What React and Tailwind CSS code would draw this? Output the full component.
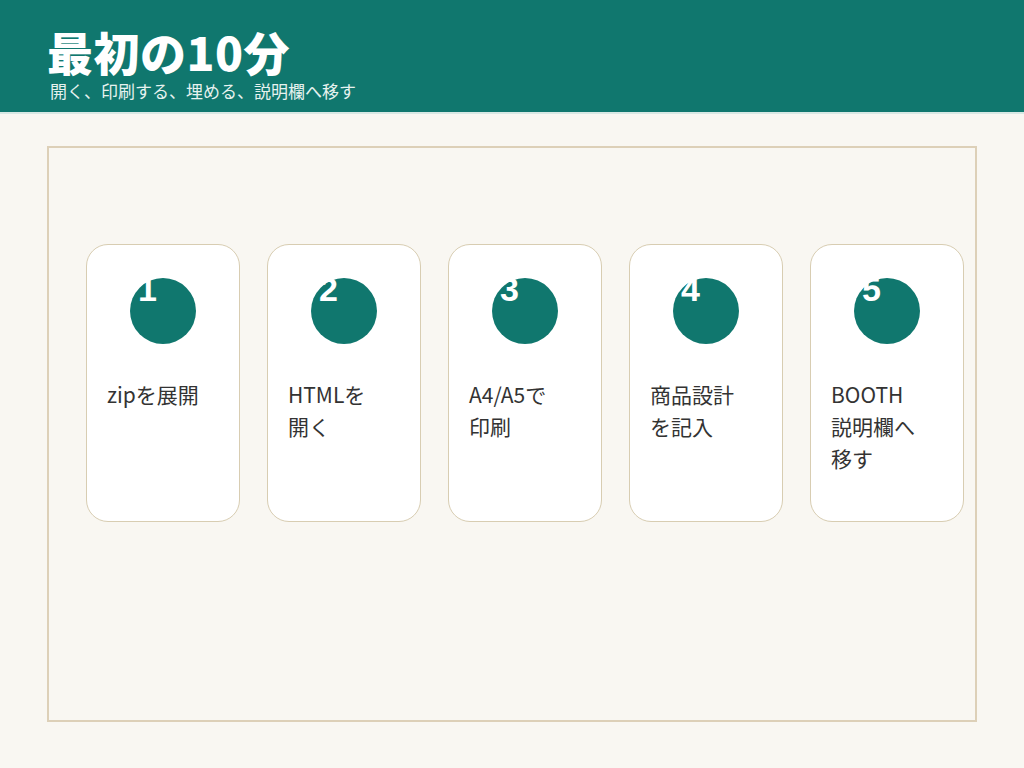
export default function App() {
  const steps = [["zipを展開"], ["HTMLを", "開く"], ["A4/A5で", "印刷"], ["商品設計", "を記入"], ["BOOTH", "説明欄へ", "移す"]];
  const f = { fontFamily: '"Noto Sans CJK JP", sans-serif' };
  return (
    <div className="w-[1024px] h-[768px] bg-[#f9f7f2] flex flex-col" style={f}>
      <div className="h-[114px] bg-[#10776e] border-b-2 border-[#d8e8e4] pl-[47px] pt-[22px]">
        <div className="text-white text-[46px] font-black leading-[58px] tracking-[0.5px]">最初の10分</div>
        <div className="text-[#e6f2ef] text-[17px] leading-[22px] pl-[3px]">開く、印刷する、埋める、説明欄へ移す</div>
      </div>
      <div className="mx-[47px] mt-[32px] h-[576px] border-2 border-[#ddd0b8] pt-[96px] pl-[37px]">
        <div className="flex gap-[27px]">
          {steps.map((s, i) => (
            <div key={i} className="w-[154px] h-[278px] bg-white border border-[#d8cdb2] rounded-[22px] pt-[33px] px-[20px]">
              <div className="relative ml-[23px] w-[66px] h-[66px] rounded-full bg-[#10776e]">
                <span className="absolute left-[8px] top-[-6px] text-white text-[34px] font-black leading-none" style={{fontFamily:'"Liberation Sans", sans-serif'}}>{i + 1}</span>
              </div>
              <div className="mt-[34px] text-[21px] leading-[32px] text-[#333]">
                {s.map((l, j) => <div key={j}>{l}</div>)}
              </div>
            </div>
          ))}
        </div>
      </div>
    </div>
  );
}
